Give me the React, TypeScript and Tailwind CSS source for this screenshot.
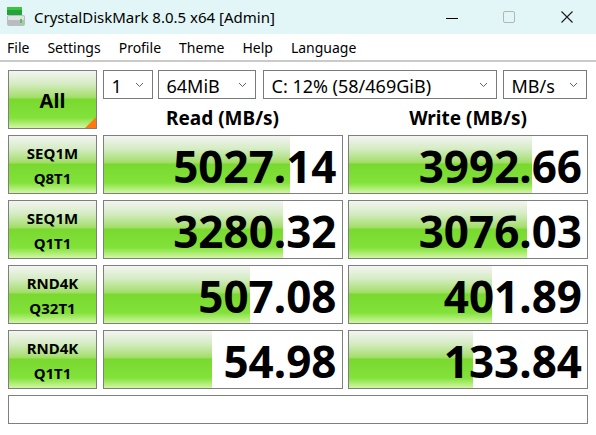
import React from 'react'

const green =
  'bg-[linear-gradient(to_bottom,#f3f5f1_0%,#d6ecc5_22%,#a4de6c_46%,#7ad92f_50%,#82e23a_82%,#d2f6a4_100%)]'

const rows = [
  { a: 'SEQ1M', b: 'Q8T1', read: 5027.14, write: 3992.66 },
  { a: 'SEQ1M', b: 'Q1T1', read: 3280.32, write: 3076.03 },
  { a: 'RND4K', b: 'Q32T1', read: 507.08, write: 401.89 },
  { a: 'RND4K', b: 'Q1T1', read: 54.98, write: 133.84 },
]

const fill = (v: number) => Math.max(0, Math.min(1, (Math.log10(v) + 1) / 6)) * 100

const Chevron = () => (
  <svg width="9" height="6" viewBox="0 0 9 6" className="shrink-0">
    <path d="M1 1l3.5 3.5L8 1" fill="none" stroke="#606060" strokeWidth="1" />
  </svg>
)

const Select = ({ label, w }: { label: string; w: string }) => (
  <div className={`${w} flex h-[29px] items-center justify-between border border-[#7a7a7a] bg-white pl-[8px] pr-[8px]`}>
    <span className="pt-[2px] text-[18px] leading-[22px] text-black">{label}</span>
    <Chevron />
  </div>
)

const Cell = ({ v }: { v: number }) => (
  <div className="relative flex h-[59px] items-center justify-end border border-[#7f7f7f] bg-white pr-[5px]">
    <div className={`absolute inset-y-0 left-0 ${green}`} style={{ width: `${fill(v)}%` }} />
    <span className="relative pt-[3px] text-[44px] font-bold leading-[50px] text-black">
      {v.toFixed(2)}
    </span>
  </div>
)

const DriveIcon = () => (
  <svg width="20" height="20" viewBox="0 0 20 20">
    <rect x="1" y="0" width="15" height="3" fill="#3cc43c" />
    <rect x="1" y="3" width="15" height="5" fill="#1fa53a" />
    <rect x="1" y="8" width="18" height="11" rx="2" fill="#b9bdbf" />
    <rect x="2" y="9" width="16" height="4" rx="1" fill="#dfe2e3" />
    <rect x="14" y="12" width="2" height="4" fill="#3fd13f" />
  </svg>
)

export default function App() {
  return (
    <div className="flex h-[435px] w-[596px] flex-col bg-white font-['Noto_Sans',sans-serif] text-black">
      <div className="flex h-[34px] items-center bg-[#e3f6f7]">
        <div className="ml-[6px] mt-[-1px]">
          <DriveIcon />
        </div>
        <span className="ml-[8px] text-[15px]">CrystalDiskMark 8.0.5 x64 [Admin]</span>
        <div className="ml-auto flex h-full items-center">
          <div className="flex w-[57px] justify-center">
            <div className="mt-[2px] h-px w-[12px] bg-black" />
          </div>
          <div className="flex w-[58px] justify-center">
            <div className="h-[12px] w-[12px] rounded-[2px] border border-[#b5b5b5]" />
          </div>
          <div className="flex w-[58px] justify-center">
            <svg width="12" height="12" viewBox="0 0 12 12">
              <path d="M0.5 0.5l11 11M11.5 0.5l-11 11" stroke="#1a1a1a" strokeWidth="1.1" />
            </svg>
          </div>
        </div>
      </div>
      <div className="flex h-[26px] items-center gap-[18px] pl-[7px] text-[14px]">
        <span>File</span>
        <span>Settings</span>
        <span>Profile</span>
        <span>Theme</span>
        <span>Help</span>
        <span>Language</span>
      </div>
      <div className="h-[2px] bg-[#cacaca]" />
      <div className="grid grid-cols-[89px_240px_240px] gap-x-[5.5px] gap-y-[6px] pl-[8px] pt-[8px]">
        <div className={`relative flex h-[59px] items-center justify-center border border-[#7f7f7f] ${green}`}>
          <span className="pt-[2px] text-[20px] font-bold">All</span>
          <div className="absolute bottom-0 right-0 h-0 w-0 border-b-[11px] border-l-[11px] border-b-[#ff7a12] border-l-transparent" />
        </div>
        <div className="col-span-2 flex h-[59px] flex-col">
          <div className="flex">
            <Select label="1" w="w-[50px]" />
            <div className="ml-[5px]">
              <Select label="64MiB" w="w-[98px]" />
            </div>
            <div className="ml-[7px]">
              <Select label="C: 12% (58/469GiB)" w="w-[234px]" />
            </div>
            <div className="ml-[6px]">
              <Select label="MB/s" w="w-[84px]" />
            </div>
          </div>
          <div className="grid flex-1 grid-cols-2 gap-x-[5.5px] pt-[9px] text-[19px] font-bold leading-none">
            <div className="flex items-center justify-center">Read (MB/s)</div>
            <div className="flex items-center justify-center">Write (MB/s)</div>
          </div>
        </div>
        {rows.map((r, i) => (
          <React.Fragment key={i}>
            <div className={`flex h-[59px] flex-col items-center justify-center border border-[#7f7f7f] ${green} pt-[2px] text-[15px] font-bold leading-[25px]`}>
              <span>{r.a}</span>
              <span>{r.b}</span>
            </div>
            <Cell v={r.read} />
            <Cell v={r.write} />
          </React.Fragment>
        ))}
        <div className="col-span-3 h-[29px] border border-[#7f7f7f] bg-white" />
      </div>
    </div>
  )
}
